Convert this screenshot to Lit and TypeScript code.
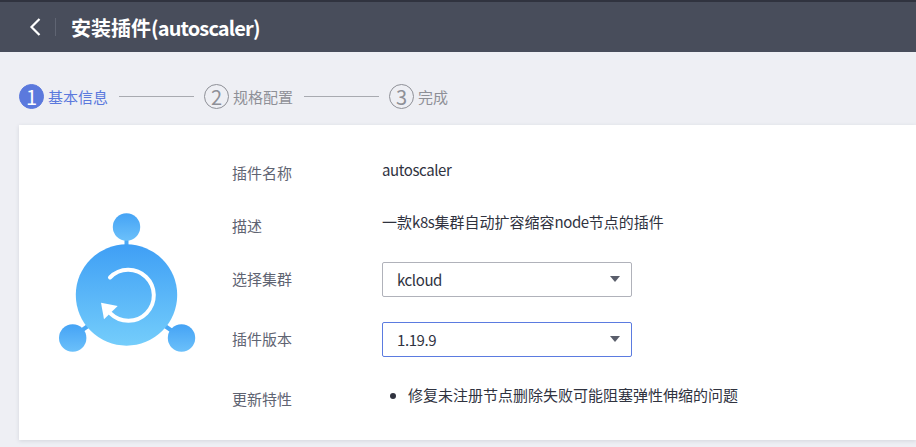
import { LitElement, html, css } from "lit";
import { customElement } from "lit/decorators.js";

@customElement("app-root")
export class AppRoot extends LitElement {
  static styles = css`
    :host {
      display: block;
      width: 916px;
      height: 447px;
      overflow: hidden;
      background: #eeeff4;
      font-family: "Noto Sans CJK SC", "Noto Sans", sans-serif;
      font-size: 15px;
      color: #30333f;
    }
    .header {
      height: 50px;
      border-top: 2px solid #30333f;
      background: #484d5b;
      display: flex;
      align-items: center;
      color: #fff;
    }
    .back {
      height: 18px;
      border-right: 1px solid #5f6472;
      display: flex;
      align-items: center;
      padding-left: 29px;
      width: 26px;
    }
    .title {
      margin-left: 15px;
      font-size: 20px;
      font-weight: 700;
    }
    .latin-title { letter-spacing: -0.85px; }
    .latin { letter-spacing: -0.4px; }
    .steps {
      height: 73px;
      padding: 16px 0 0 19px;
      box-sizing: border-box;
      display: flex;
      align-items: center;
      color: #8e9097;
    }
    .num {
      width: 25px;
      height: 25px;
      box-sizing: border-box;
      border: 1px solid #8e9097;
      border-radius: 50%;
      display: flex;
      align-items: center;
      justify-content: center;
      font-size: 20px;
      line-height: 1;
      margin-right: 4px;
    }
    .step { display: flex; align-items: center; }
    .step.active { color: #5b79dd; }
    .step.active .num { background: #5b79dd; border-color: #5b79dd; color: #fff; }
    .line {
      width: 75px;
      height: 1px;
      background: #a8aab0;
      margin: 0 10px 0 11px;
    }
    .card {
      margin-left: 19px;
      height: 315px;
      background: #fff;
      box-shadow: 0 1px 4px rgba(60, 65, 85, 0.14);
      display: flex;
    }
    .logo { width: 213px; flex: none; }
    .logo svg { display: block; }
    .form { padding-top: 21px; flex: 1; }
    .row {
      display: grid;
      grid-template-columns: 150px 1fr;
      align-items: center;
    }
    .r1 { height: 54px; }
    .r2 { height: 51px; }
    .r3 { height: 56px; }
    .r4 { height: 64px; }
    .r5 { height: 56px; }
    .label { color: #5f6472; line-height: 20px; }
    .text { line-height: 20px; padding-bottom: 7px; }
    .select {
      width: 250px;
      height: 35px;
      box-sizing: border-box;
      border: 1px solid #b0b2ba;
      border-radius: 2px;
      display: flex;
      align-items: center;
      justify-content: space-between;
      padding: 0 11px 0 14px;
    }
    .select.focus { border-color: #5b7be0; }
    .caret {
      width: 0;
      height: 0;
      border-left: 5.5px solid transparent;
      border-right: 5.5px solid transparent;
      border-top: 6px solid #5a5e6b;
    }
    ul {
      margin: 0;
      padding: 0 0 8px 26px;
      line-height: 20px;
    }
  `;

  render() {
    return html`
      <div class="header">
        <div class="back">
          <svg width="12" height="18" viewBox="0 0 12 18">
            <path d="M10.5 1 L2.5 9 L10.5 17" fill="none" stroke="#fff" stroke-width="2.2" />
          </svg>
        </div>
        <div class="title">安装插件<span class="latin-title">(autoscaler)</span></div>
      </div>
      <div class="steps">
        <div class="step active"><span class="num">1</span>基本信息</div>
        <span class="line"></span>
        <div class="step"><span class="num">2</span>规格配置</div>
        <span class="line"></span>
        <div class="step"><span class="num">3</span>完成</div>
      </div>
      <div class="card">
        <div class="logo">
          <svg width="213" height="315" viewBox="19 125 213 315">
            <defs>
              <linearGradient id="big" x1="0" y1="0" x2="0" y2="1">
                <stop offset="0" stop-color="#3f9ff5" />
                <stop offset="1" stop-color="#74cdfb" />
              </linearGradient>
              <linearGradient id="small" x1="0" y1="0" x2="0" y2="1">
                <stop offset="0" stop-color="#45a3f5" />
                <stop offset="1" stop-color="#6bc0fa" />
              </linearGradient>
            </defs>
            <path d="M126.5 238 V246 M78 333 L88 326 M175 333 L165 326" stroke="#4aa8f5" stroke-width="4" fill="none" />
            <circle cx="126.5" cy="227" r="13.7" fill="url(#small)" />
            <circle cx="72.7" cy="338" r="13.7" fill="url(#small)" />
            <circle cx="181.5" cy="338" r="13.7" fill="url(#small)" />
            <circle cx="126.5" cy="295" r="50.7" fill="url(#big)" />
            <path d="M110 277.5 A25.5 25.5 0 1 1 110.5 313.5" fill="none" stroke="#fff" stroke-width="4" stroke-linecap="round" />
            <path d="M101 302.7 L117.7 306 L104 319.3 Z" fill="#fff" />
          </svg>
        </div>
        <div class="form">
          <div class="row r1"><div class="label">插件名称</div><div class="text latin">autoscaler</div></div>
          <div class="row r2"><div class="label">描述</div><div class="text">一款<span class="latin">k8s</span>集群自动扩容缩容<span class="latin">node</span>节点的插件</div></div>
          <div class="row r3"><div class="label">选择集群</div><div class="select"><span class="latin">kcloud</span><i class="caret"></i></div></div>
          <div class="row r4"><div class="label">插件版本</div><div class="select focus"><span class="latin">1.19.9</span><i class="caret"></i></div></div>
          <div class="row r5"><div class="label">更新特性</div><ul><li>修复未注册节点删除失败可能阻塞弹性伸缩的问题</li></ul></div>
        </div>
      </div>
    `;
  }
}
